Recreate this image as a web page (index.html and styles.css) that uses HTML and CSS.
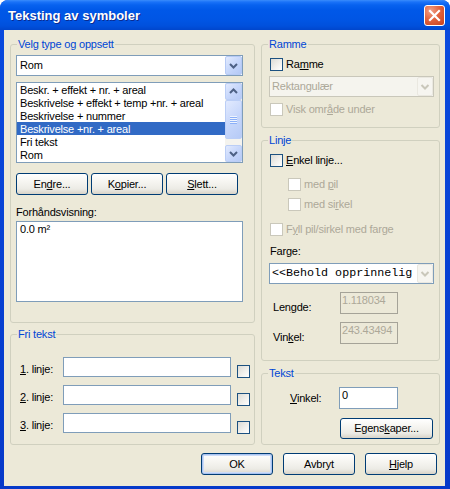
FILE: index.html
```html
<!DOCTYPE html>
<html lang="no">
<head>
<meta charset="utf-8">
<title>Teksting av symboler</title>
<link rel="stylesheet" href="styles.css">
</head>
<body>
<div class="window">
  <div class="titlebar">
    <span class="title">Teksting av symboler</span>
    <span class="close"><svg width="19" height="19" viewBox="0 0 19 19"><path d="M5 5 L14 14 M14 5 L5 14" stroke="#fff" stroke-width="2.2" stroke-linecap="square" fill="none"/></svg></span>
  </div>
  <div class="client">
    <div class="columns">
      <div class="col col-left">
        <fieldset class="group group-velg">
          <legend>Velg type og oppsett</legend>
          <div class="group-body body-velg">
            <div class="combo combo-rom">
              <span class="combo-text">Rom</span>
              <span class="drop"><svg width="15" height="17" viewBox="0 0 15 17"><path d="M4 7 L7.5 10.5 L11 7" stroke="#4D6185" stroke-width="2" fill="none"/></svg></span>
            </div>
            <div class="listbox">
              <ul class="items">
                <li>Beskr. + effekt + nr. + areal</li>
                <li>Beskrivelse + effekt + temp +nr. + areal</li>
                <li>Beskrivelse + nummer</li>
                <li class="selected">Beskrivelse +nr. + areal</li>
                <li>Fri tekst</li>
                <li>Rom</li>
                <li>Temperatur</li>
              </ul>
              <div class="vscroll">
                <span class="sb-btn"><svg width="15" height="15" viewBox="0 0 15 15"><path d="M4 9 L7.5 5.5 L11 9" stroke="#4D6185" stroke-width="2" fill="none"/></svg></span>
                <span class="sb-thumb"><svg width="15" height="37" viewBox="0 0 15 37"><path d="M4 15.5 H11 M4 17.5 H11 M4 19.5 H11 M4 21.5 H11" stroke="#EEF4FE" stroke-width="1"/><path d="M4 16.5 H11 M4 18.5 H11 M4 20.5 H11 M4 22.5 H11" stroke="#8CB0F8" stroke-width="1"/></svg></span>
                <span class="sb-track"></span>
                <span class="sb-btn"><svg width="15" height="15" viewBox="0 0 15 15"><path d="M4 6 L7.5 9.5 L11 6" stroke="#4D6185" stroke-width="2" fill="none"/></svg></span>
              </div>
            </div>
            <div class="btn-row">
              <button class="btn btn-list">En<u>d</u>re...</button>
              <button class="btn btn-list">K<u>o</u>pier...</button>
              <button class="btn btn-list"><u>S</u>lett...</button>
            </div>
            <div class="field-label preview-label">Forhåndsvisning:</div>
            <div class="preview">0.0 m²</div>
          </div>
        </fieldset>
        <fieldset class="group group-fri">
          <legend>Fri tekst</legend>
          <div class="group-body body-fri">
            <div class="line-row">
              <span class="line-label"><u>1</u>. linje:</span>
              <span class="textbox line-input"></span>
              <span class="check line-check"></span>
            </div>
            <div class="line-row">
              <span class="line-label"><u>2</u>. linje:</span>
              <span class="textbox line-input"></span>
              <span class="check line-check"></span>
            </div>
            <div class="line-row">
              <span class="line-label"><u>3</u>. linje:</span>
              <span class="textbox line-input"></span>
              <span class="check line-check"></span>
            </div>
          </div>
        </fieldset>
      </div>
      <div class="col col-right">
        <fieldset class="group group-ramme">
          <legend>Ramme</legend>
          <div class="group-body body-right">
            <div class="check-row"><span class="check"></span><span>Ra<u>m</u>me</span></div>
            <div class="combo combo-disabled combo-rekt">
              <span class="combo-text">Rektangulær</span>
              <span class="drop drop-disabled"><svg width="14" height="17" viewBox="0 0 14 17"><path d="M3.5 7 L7 10.5 L10.5 7" stroke="#C9C7BA" stroke-width="2" fill="none"/></svg></span>
            </div>
            <div class="check-row disabled row-visk"><span class="check check-disabled"></span><span>Visk omr<u>å</u>de under</span></div>
          </div>
        </fieldset>
        <fieldset class="group group-linje">
          <legend>Linje</legend>
          <div class="group-body body-right">
            <div class="check-row"><span class="check"></span><span><u>E</u>nkel linje...</span></div>
            <div class="check-row disabled sub-row row-pil"><span class="check check-disabled"></span><span>med <u>p</u>il</span></div>
            <div class="check-row disabled sub-row row-sirkel"><span class="check check-disabled"></span><span>med si<u>r</u>kel</span></div>
            <div class="check-row disabled row-fyll"><span class="check check-disabled"></span><span>F<u>y</u>ll pil/sirkel med farge</span></div>
            <div class="field-label farge-label">Farge:</div>
            <div class="combo combo-farge">
              <span class="combo-text mono">&lt;&lt;Behold opprinnelig</span>
              <span class="drop drop-disabled"><svg width="14" height="17" viewBox="0 0 14 17"><path d="M3.5 7 L7 10.5 L10.5 7" stroke="#C9C7BA" stroke-width="2" fill="none"/></svg></span>
            </div>
            <div class="value-row row-lengde">
              <span class="value-label">Len<u>g</u>de:</span>
              <span class="textbox textbox-disabled value-box">1.118034</span>
            </div>
            <div class="value-row row-vinkel">
              <span class="value-label">Vin<u>k</u>el:</span>
              <span class="textbox textbox-disabled value-box">243.43494</span>
            </div>
          </div>
        </fieldset>
        <fieldset class="group group-tekst">
          <legend>Tekst</legend>
          <div class="group-body body-right">
            <div class="tekst-row">
              <span class="tekst-label"><u>V</u>inkel:</span>
              <span class="textbox tekst-box">0</span>
            </div>
            <button class="btn btn-egen">Egens<u>k</u>aper...</button>
          </div>
        </fieldset>
      </div>
    </div>
    <div class="dlg-buttons">
      <button class="btn btn-dlg btn-default">OK</button>
      <button class="btn btn-dlg">Avbryt</button>
      <button class="btn btn-dlg"><u>H</u>jelp</button>
    </div>
  </div>
</div>
</body>
</html>
```

FILE: styles.css
```css
* { box-sizing: border-box; }

html, body {
  margin: 0;
  padding: 0;
  background: #ffffff;
}

body {
  font-family: "Liberation Sans", Arial, sans-serif;
  font-size: 11px;
  line-height: 13px;
  letter-spacing: -0.2px;
  color: #000;
}

u { text-decoration: underline; text-underline-offset: 1px; }

.window {
  width: 450px;
  height: 489px;
  display: flex;
  flex-direction: column;
  background: linear-gradient(#0A4BDF, #0639C9);
  border-radius: 8px 8px 0 0;
  overflow: hidden;
}

.titlebar {
  height: 30px;
  flex: none;
  display: flex;
  align-items: center;
  justify-content: space-between;
  padding: 0 5px 0 8px;
  background: linear-gradient(#3A8CFB 0, #1A72F8 2px, #0862EF 5px, #0058E8 10px, #0055E4 20px, #0050DC 26px, #0046CC 30px);
}

.title {
  color: #fff;
  font-weight: bold;
  font-size: 13px;
  line-height: 15px;
  letter-spacing: 0;
  text-shadow: 1px 1px 0 #0B2B8F;
}

.close {
  width: 21px;
  height: 21px;
  border: 1px solid #fff;
  border-radius: 3px;
  background: radial-gradient(circle at 30% 25%, #F0A088 0%, #E2643F 45%, #C8411C 100%);
  display: flex;
  align-items: center;
  justify-content: center;
}

.client {
  flex: 1;
  margin: 0 5px 3px 4px;
  background: #ECE9D8;
  padding: 7px 5px 0 6px;
  display: flex;
  flex-direction: column;
}

.columns {
  display: flex;
  gap: 6px;
}

.col {
  display: flex;
  flex-direction: column;
}

.col-left { width: 245px; gap: 4px; }
.col-right { width: 179px; gap: 5px; }

.group {
  margin: 0;
  padding: 0;
  border: 1px solid #D0D0BF;
  border-radius: 3px;
  min-width: 0;
}

.group > legend {
  margin-left: 6px;
  padding: 0 1px;
  line-height: 14px;
  color: #0046D5;
}

.group-velg { height: 286px; }
.group-fri { height: 118px; }
.group-ramme { height: 91px; }
.group-linje { height: 228px; }
.group-tekst { height: 79px; }

.body-velg { padding: 4px 0 0 5px; }
.body-fri { padding: 16px 0 0 9px; }
.body-right { padding: 7px 0 0 8px; }

/* combo boxes */
.combo {
  display: flex;
  height: 21px;
  border: 1px solid #7F9DB9;
  background: #fff;
}

.combo-text {
  flex: 1;
  padding: 3px 0 0 3px;
  white-space: nowrap;
  overflow: hidden;
}

.drop {
  width: 17px;
  flex: none;
  border: 1px solid #B6CAF5;
  border-radius: 2px;
  background: linear-gradient(135deg, #E3EBFE 0%, #C6D7FB 50%, #B3C8F5 100%);
  display: flex;
  align-items: center;
  justify-content: center;
}

.drop-disabled {
  width: 16px;
  border-color: #EAE8E0;
  background: #F6F5F0;
}

.combo-rom { width: 227px; }

.combo-disabled {
  border-color: #C9C7BA;
  background: #F5F4EE;
  color: #ACA899;
}

.combo-rekt {
  width: 165px;
  margin: 5px 0 0 -1px;
}

.combo-rekt .combo-text { padding-left: 2px; }

.combo-farge {
  width: 165px;
  margin: 5px 0 0 -1px;
}

.mono {
  font-family: "Liberation Mono", "Courier New", monospace;
  font-size: 11.7px;
  letter-spacing: 0;
  padding: 3px 0 0 2px;
}

/* list box */
.listbox {
  margin-top: 6px;
  width: 227px;
  height: 81px;
  border: 1px solid #7F9DB9;
  background: #fff;
  display: flex;
}

.items {
  flex: 1;
  list-style: none;
  margin: 0;
  padding: 0;
  overflow: hidden;
}

.items li {
  height: 13px;
  padding: 1px 0 0 3px;
  line-height: 12px;
  white-space: nowrap;
}

.items li.selected {
  background: #316AC5;
  color: #fff;
}

.vscroll {
  width: 17px;
  flex: none;
  display: flex;
  flex-direction: column;
  background: #F4F3EE;
}

.sb-btn, .sb-thumb {
  flex: none;
  border: 1px solid #BBCEF6;
  border-radius: 2px;
  background: linear-gradient(135deg, #E2EAFE 0%, #C7D7FB 50%, #B6CAF6 100%);
  display: flex;
  align-items: center;
  justify-content: center;
}

.sb-btn { height: 17px; }
.sb-thumb { height: 39px; }
.sb-track { flex: 1; }

/* buttons */
.btn {
  font: inherit;
  letter-spacing: inherit;
  color: #000;
  padding: 0;
  border: 1px solid #003C74;
  border-radius: 3px;
  background: linear-gradient(180deg, #FFFFFF 0%, #F7F6F2 35%, #ECEBE5 75%, #D8D3C8 100%);
  display: flex;
  align-items: center;
  justify-content: center;
}

.btn-row {
  display: flex;
  gap: 3px;
  margin-top: 10px;
}

.btn-list { width: 72px; height: 22px; }

.btn-egen {
  width: 93px;
  height: 21px;
  margin: 9px 0 0 70px;
}

.dlg-buttons {
  display: flex;
  justify-content: flex-end;
  gap: 10px;
  margin-top: 8px;
  padding-right: 3px;
}

.btn-dlg { width: 72px; height: 22px; }

.btn-default {
  box-shadow: inset 0 0 0 1px #A9C3F0, inset 0 0 0 2px #CCDCF7;
}

/* labels and boxes */
.field-label { white-space: nowrap; }
.preview-label { margin-top: 11px; }

.preview {
  margin-top: 2px;
  width: 227px;
  height: 81px;
  border: 1px solid #7F9DB9;
  background: #fff;
  padding: 1px 0 0 3px;
}

.textbox {
  border: 1px solid #7F9DB9;
  background: #fff;
  display: block;
}

.textbox-disabled {
  border-color: #A5A398;
  background: #ECE9D8;
  color: #ACA899;
}

/* Fri tekst rows */
.line-row {
  display: flex;
  align-items: flex-start;
  height: 20px;
}

.line-row + .line-row { margin-top: 8px; }

.line-label {
  width: 43px;
  flex: none;
  margin-top: 6px;
  white-space: nowrap;
}

.line-input {
  width: 168px;
  height: 20px;
  flex: none;
}

.line-check { margin: 8px 0 0 6px; }

/* checkboxes */
.check {
  width: 13px;
  height: 13px;
  flex: none;
  border: 1px solid #1C5180;
  background: linear-gradient(135deg, #DCDBD5 0%, #F3F2EE 60%, #FFFFFF 100%);
}

.check-disabled {
  border-color: #CAC8BB;
  background: #fff;
}

.check-row {
  display: flex;
  align-items: center;
  gap: 3px;
  height: 13px;
  white-space: nowrap;
}

.check-row.disabled { color: #ACA899; }

.row-visk { margin-top: 6px; }
.sub-row { padding-left: 18px; }
.row-pil { margin-top: 11px; }
.row-sirkel { margin-top: 7px; }
.row-fyll { margin-top: 12px; }
.farge-label { margin-top: 9px; }

/* Lengde / Vinkel */
.value-row {
  display: flex;
  align-items: flex-start;
  margin-top: 8px;
}

.value-label {
  width: 70px;
  flex: none;
  padding-left: 3px;
  margin-top: 9px;
}

.value-box {
  width: 58px;
  height: 22px;
  padding: 1px 0 0 1px;
}

/* Tekst group */
.tekst-row {
  display: flex;
  align-items: center;
}

.tekst-label {
  width: 49px;
  margin-left: 20px;
  flex: none;
}

.tekst-box {
  width: 59px;
  height: 22px;
  padding: 1px 0 0 2px;
}
```
